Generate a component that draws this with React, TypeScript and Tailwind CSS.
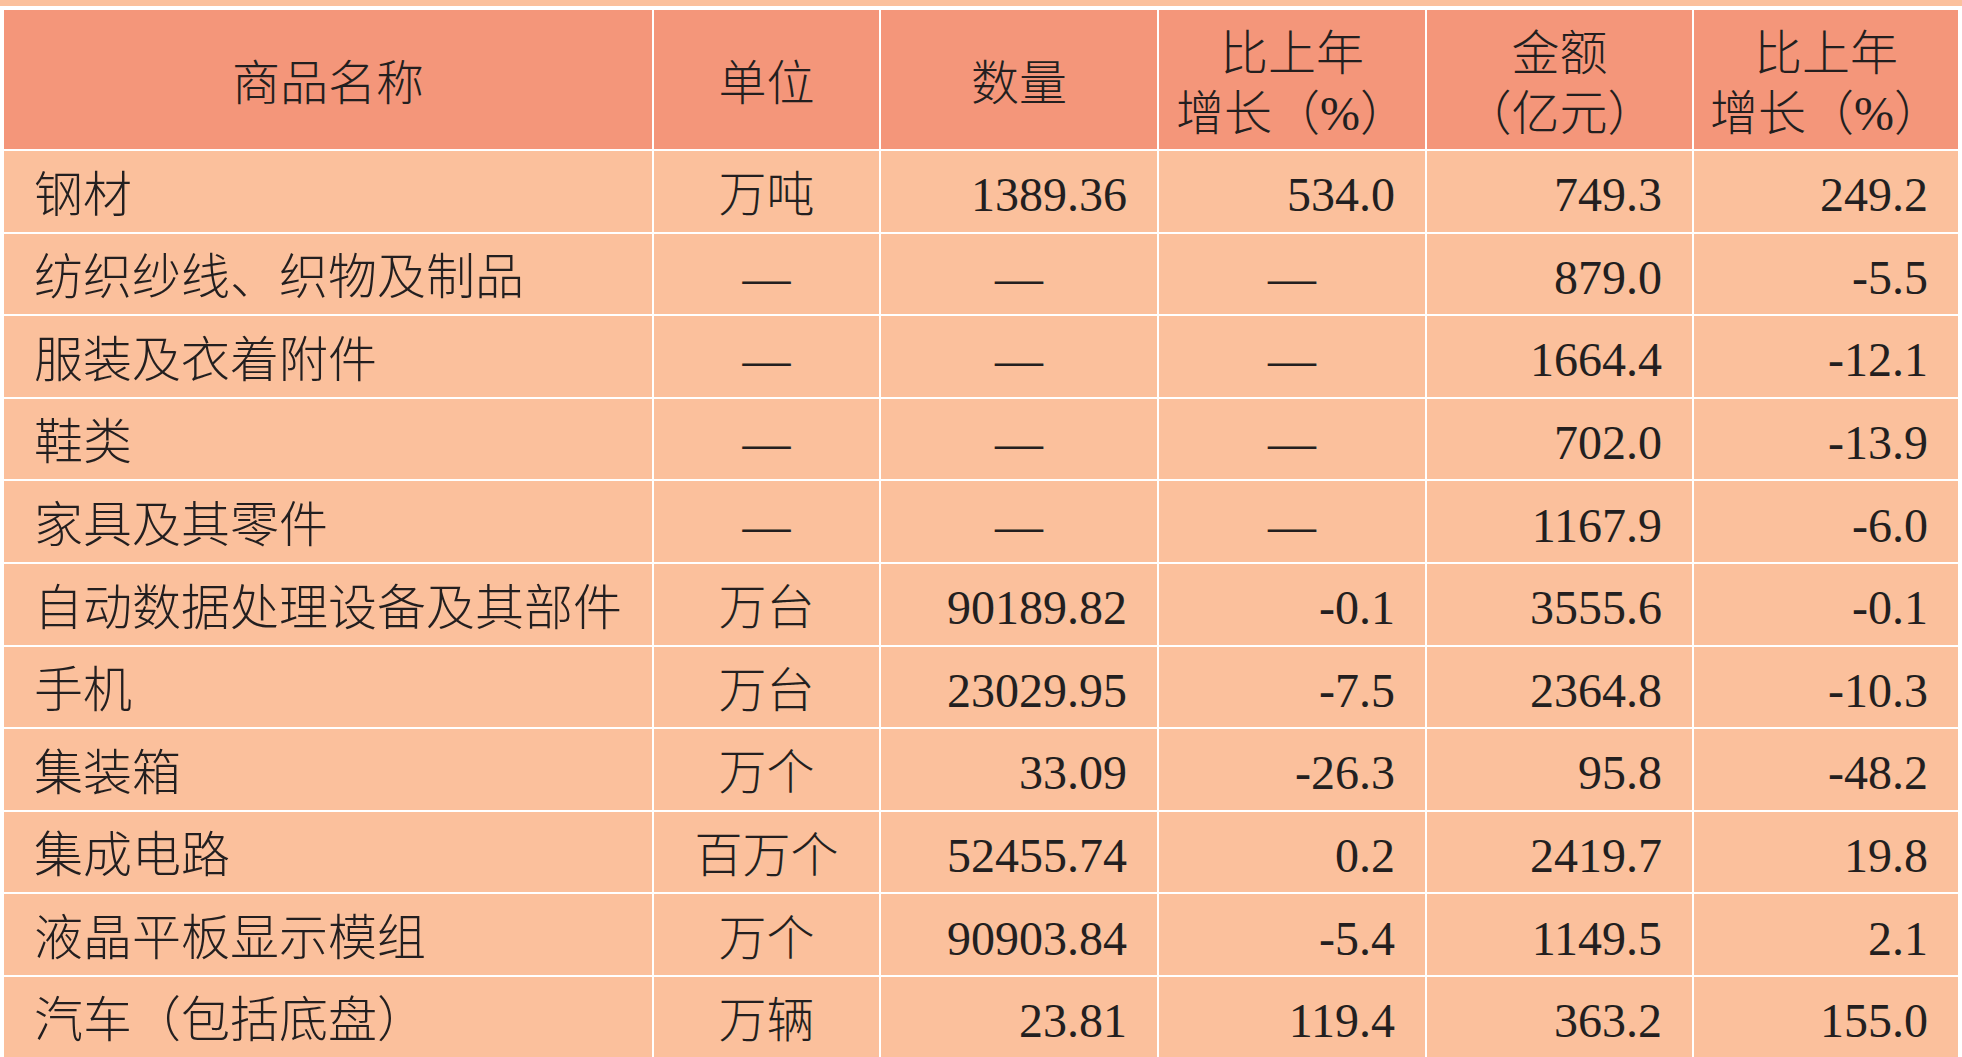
import React from "react";

// Import table: commodity, unit, quantity, yoy %, amount (100M yuan), yoy %
interface Row {
  name: string;
  unit: string;
  qty: string;
  qtyGrowth: string;
  amount: string;
  amountGrowth: string;
}

const DASH = "—";

const ROWS: Row[] = [
  { name: "钢材", unit: "万吨", qty: "1389.36", qtyGrowth: "534.0", amount: "749.3", amountGrowth: "249.2" },
  { name: "纺织纱线、织物及制品", unit: DASH, qty: DASH, qtyGrowth: DASH, amount: "879.0", amountGrowth: "-5.5" },
  { name: "服装及衣着附件", unit: DASH, qty: DASH, qtyGrowth: DASH, amount: "1664.4", amountGrowth: "-12.1" },
  { name: "鞋类", unit: DASH, qty: DASH, qtyGrowth: DASH, amount: "702.0", amountGrowth: "-13.9" },
  { name: "家具及其零件", unit: DASH, qty: DASH, qtyGrowth: DASH, amount: "1167.9", amountGrowth: "-6.0" },
  { name: "自动数据处理设备及其部件", unit: "万台", qty: "90189.82", qtyGrowth: "-0.1", amount: "3555.6", amountGrowth: "-0.1" },
  { name: "手机", unit: "万台", qty: "23029.95", qtyGrowth: "-7.5", amount: "2364.8", amountGrowth: "-10.3" },
  { name: "集装箱", unit: "万个", qty: "33.09", qtyGrowth: "-26.3", amount: "95.8", amountGrowth: "-48.2" },
  { name: "集成电路", unit: "百万个", qty: "52455.74", qtyGrowth: "0.2", amount: "2419.7", amountGrowth: "19.8" },
  { name: "液晶平板显示模组", unit: "万个", qty: "90903.84", qtyGrowth: "-5.4", amount: "1149.5", amountGrowth: "2.1" },
  { name: "汽车（包括底盘）", unit: "万辆", qty: "23.81", qtyGrowth: "119.4", amount: "363.2", amountGrowth: "155.0" },
];

const headCell = "bg-[#f4967a] flex flex-col items-center justify-center pt-2 leading-[60px]";
const cell = "bg-[#fbc09c] h-[80.6px] flex items-center pt-2";

function NumCell({ value }: { value: string }) {
  if (value === DASH) {
    return <div className={`${cell} justify-center`}>{value}</div>;
  }
  return <div className={`${cell} justify-end pr-[30px]`}>{value}</div>;
}

export default function App() {
  return (
    <div
      className="w-[1962px] h-[1057px] overflow-hidden bg-white text-[48px] font-light text-[#231f20]"
      style={{ fontFamily: '"Liberation Serif", "Noto Sans CJK SC", serif' }}
    >
      <div className="h-[6px] bg-[#fbc09c]" />
      <div className="h-[4px]" />
      <div className="grid grid-cols-[648px_225px_276px_266px_265px_264px] gap-[2px] pl-[4px]">
        <div className={`${headCell} h-[139px]`}>商品名称</div>
        <div className={headCell}>单位</div>
        <div className={headCell}>数量</div>
        <div className={headCell}>
          <span>比上年</span>
          <span>增长（%）</span>
        </div>
        <div className={headCell}>
          <span>金额</span>
          <span>（亿元）</span>
        </div>
        <div className={headCell}>
          <span>比上年</span>
          <span>增长（%）</span>
        </div>

        {ROWS.map((row, index) => (
          <React.Fragment key={index}>
            <div className={`${cell} pl-[30px] text-[49px]`}>{row.name}</div>
            <div className={`${cell} justify-center`}>{row.unit}</div>
            <NumCell value={row.qty} />
            <NumCell value={row.qtyGrowth} />
            <NumCell value={row.amount} />
            <NumCell value={row.amountGrowth} />
          </React.Fragment>
        ))}
      </div>
    </div>
  );
}
